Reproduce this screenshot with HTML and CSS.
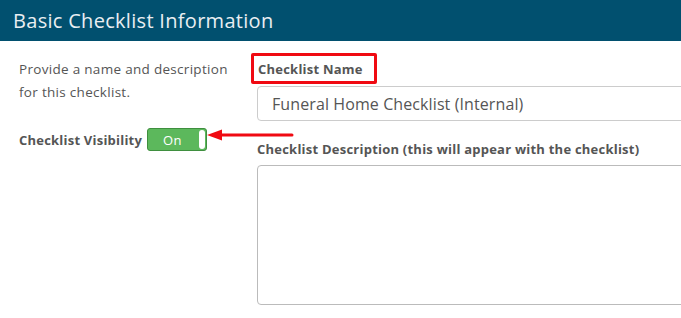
FILE: index.html
```html
<!DOCTYPE html>
<html lang="en">
<head>
  <meta charset="UTF-8">
  <title>Basic Checklist Information</title>
  <link rel="stylesheet" href="styles.css">
</head>
<body>
<div class="panel">
  <div class="panel-head"><h2>Basic Checklist Information</h2></div>
  <div class="panel-body">
    <div class="col-info">
      <p class="help">Provide a name and description for this checklist.</p>
      <div class="visibility">
        <span class="vis-label">Checklist Visibility</span>
        <span class="toggle"><span class="toggle-text">On</span><span class="knob"></span></span>
        <!-- callout arrow -->
        <svg class="callout-arrow" width="88" height="14" viewBox="0 0 88 14">
          <line x1="12" y1="7" x2="85" y2="7" stroke="#f00a12" stroke-width="3" stroke-linecap="round"/>
          <polygon points="0,7 15,1.5 15,12.5" fill="#f00a12"/>
        </svg>
      </div>
    </div>
    <div class="col-fields">
      <label class="field-label marked">Checklist Name</label>
      <input type="text" class="field-input" value="Funeral Home Checklist (Internal)">
      <label class="field-label desc">Checklist Description (this will appear with the checklist)</label>
      <textarea class="field-area"></textarea>
    </div>
  </div>
</div>
</body>
</html>
```

FILE: styles.css
```css
body {
  margin: 0;
  font-family: "Open Sans", "DejaVu Sans", sans-serif;
  color: #555;
  background-color: #fff;
  overflow: hidden;
}

.panel {
  width: 681px;
  height: 318px;
  overflow: hidden;
}

.panel-head {
  background-color: #01506f;
  height: 41px;
  padding: 0 13px;
  display: flex;
  align-items: center;
}

.panel-head h2 {
  margin: 0;
  font-size: 20px;
  font-weight: normal;
  color: #e9eef2;
  letter-spacing: 0.3px;
}

.panel-body {
  display: flex;
}

.col-info {
  width: 219px;
  flex: none;
  padding: 17px 0 0 19px;
}

.help {
  margin: 0;
  font-size: 13.5px;
  letter-spacing: 0.3px;
  line-height: 23px;
  width: 212px;
}

.visibility {
  position: relative;
  display: flex;
  align-items: center;
  margin-top: 24px;
}

.vis-label {
  font-size: 13px;
  font-weight: bold;
  letter-spacing: 0.22px;
  margin-right: 5px;
}

.toggle {
  display: inline-flex;
  align-items: center;
  flex: none;
  width: 58px;
  height: 21px;
  border: 1px solid #3f8f3f;
  border-radius: 3px;
  background-color: #5cb85c;
  position: relative;
}

.toggle-text {
  color: #fff;
  font-size: 13px;
  letter-spacing: 0.3px;
  margin-left: 15px;
}

.knob {
  position: absolute;
  right: 1px;
  top: 1px;
  width: 6px;
  height: 19px;
  border-radius: 3px;
  background-color: #fff;
}

.callout-arrow {
  position: absolute;
  left: 188px;
  top: 0px;
}

.col-fields {
  display: flex;
  flex-direction: column;
  align-items: flex-start;
  padding-top: 12px;
  margin-left: 19px;
  width: 460px;
}

.field-label {
  font-size: 13px;
  font-weight: bold;
  letter-spacing: 0.23px;
  line-height: 18px;
}

.field-label.marked {
  border: 3px solid #f00a12;
  border-radius: 2px;
  padding: 4px 11px 3px 4px;
  margin-left: -6px;
}

.field-label.desc {
  margin-top: 19px;
}

.field-input {
  margin-top: 2px;
  width: 460px;
  height: 35px;
  box-sizing: border-box;
  border: 1px solid #ccc;
  border-radius: 4px;
  padding: 0 14px;
  font-family: inherit;
  font-size: 16px;
  letter-spacing: 0.1px;
  color: #555;
}

.field-area {
  margin-top: 7px;
  width: 460px;
  height: 140px;
  box-sizing: border-box;
  border: 1px solid #bbb;
  border-radius: 4px;
  resize: none;
}
```
